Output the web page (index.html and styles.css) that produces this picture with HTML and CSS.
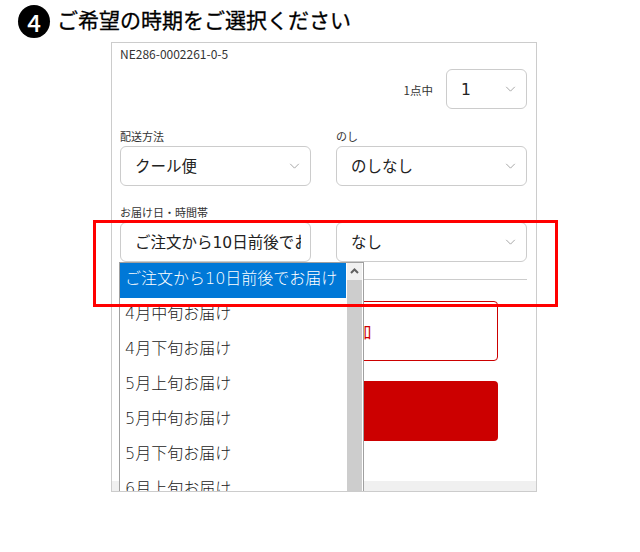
FILE: index.html
```html
<html>
<head>
<title>ご希望の時期をご選択ください</title>
<link rel="stylesheet" href="styles.css">
</head>
<body>
<h2 class="step"><span class="step-no">4</span><span class="step-text">ご希望の時期をご選択ください</span></h2>

<div class="frame">
  <p class="sku">NE286-0002261-0-5</p>

  <div class="qty-row">
    <span class="qty-label">1点中</span>
    <div class="select qty-select"><span class="select-text">1</span><svg class="chev" viewBox="0 0 12 7"><path d="M1 1l5 5 5-5"/></svg></div>
  </div>

  <div class="form-row">
    <div class="field">
      <label class="field-label">配送方法</label>
      <div class="select"><span class="select-text">クール便</span><svg class="chev" viewBox="0 0 12 7"><path d="M1 1l5 5 5-5"/></svg></div>
    </div>
    <div class="field">
      <label class="field-label">のし</label>
      <div class="select"><span class="select-text">のしなし</span><svg class="chev" viewBox="0 0 12 7"><path d="M1 1l5 5 5-5"/></svg></div>
    </div>
  </div>

  <div class="form-row form-row-2">
    <div class="field">
      <label class="field-label">お届け日・時間帯</label>
      <div class="select select-open"><span class="select-text">ご注文から10日前後でお届け</span></div>
    </div>
    <div class="field">
      <label class="field-label">&nbsp;</label>
      <div class="select"><span class="select-text">なし</span><svg class="chev" viewBox="0 0 12 7"><path d="M1 1l5 5 5-5"/></svg></div>
    </div>
  </div>

  <hr class="line">

  <div class="btn btn-outline">リストに追加</div>
  <div class="btn btn-red">カートに入れる</div>

  <div class="strip"></div>

  <!-- open dropdown -->
  <div class="listbox">
    <div class="options">
      <div class="option selected">ご注文から10日前後でお届け</div>
      <div class="option">4月中旬お届け</div>
      <div class="option">4月下旬お届け</div>
      <div class="option">5月上旬お届け</div>
      <div class="option">5月中旬お届け</div>
      <div class="option">5月下旬お届け</div>
      <div class="option">6月上旬お届け</div>
    </div>
    <div class="scrollbar">
      <div class="scroll-up"><svg viewBox="0 0 9 6"><path d="M1 5l3.5-3.5L8 5"/></svg></div>
      <div class="scroll-thumb"></div>
    </div>
  </div>
</div>

<div class="highlight"></div>
</body>
</html>
```

FILE: styles.css
```css
html, body {
  margin: 0;
  padding: 0;
}
body {
  position: relative;
  width: 640px;
  height: 552px;
  overflow: hidden;
  background: #fff;
  color: #333;
  font-family: "Noto Sans CJK JP", "Noto Sans", sans-serif;
}
.step {
  display: flex;
  align-items: center;
  height: 33px;
  margin: 0;
  padding: 5px 0 4px 18px;
  color: #000;
  font-size: 21px;
  font-weight: 400;
  line-height: 32px;
}
.step-text {
  margin-left: -1px;
  padding-bottom: 6px;
  -webkit-text-stroke: 0.3px #000;
}
.step-no {
  width: 32px;
  height: 33px;
  margin-right: 8px;
  border-radius: 50%;
  background: #000;
  color: #fff;
  font-size: 24px;
  font-weight: 500;
  line-height: 33px;
  text-align: center;
}
.frame {
  position: relative;
  box-sizing: border-box;
  width: 426px;
  height: 450px;
  margin-left: 111px;
  padding: 0 9px 0 8px;
  border: 1px solid #ccc;
  overflow: hidden;
}
.sku {
  height: 12px;
  margin: 5px 0 9px;
  font-size: 12px;
  line-height: 12px;
}
.qty-row {
  display: flex;
  align-items: center;
  justify-content: flex-end;
  gap: 13px;
}
.qty-label {
  font-size: 11.5px;
  padding-top: 2px;
}
.qty-select {
  flex: none;
  width: 81px;
}
.form-row {
  display: flex;
  gap: 25px;
  margin-top: 21px;
}
.form-row-2 {
  margin-top: 20px;
}
.field {
  width: 191px;
  min-width: 0;
}
.field-label {
  display: block;
  height: 16px;
  font-size: 11px;
  line-height: 12px;
}
.select {
  position: relative;
  box-sizing: border-box;
  height: 40px;
  padding: 0 14px;
  border: 1px solid #ccc;
  border-radius: 6px;
  color: #222;
  font-family: "DejaVu Sans", "Noto Sans CJK JP", sans-serif;
  font-size: 15.5px;
  background: #fff;
}
.select-text {
  display: block;
  overflow: hidden;
  white-space: nowrap;
  line-height: 40px;
}
.select-open {
  padding-right: 9px;
}
.chev {
  position: absolute;
  top: 16px;
  right: 10px;
  width: 11px;
  height: 6px;
  fill: none;
  stroke: #999;
  stroke-width: 1;
}
.line {
  height: 1px;
  margin: 17px 0 21px;
  border: 0;
  background: #ccc;
}
.btn {
  box-sizing: border-box;
  width: 349px;
  height: 60px;
  margin: 0 auto 20px;
  border-radius: 4px;
  font-size: 16px;
  line-height: 58px;
  text-align: center;
}
.btn-outline {
  border: 1px solid #c00;
  color: #c00;
}
.btn-red {
  background: #c00;
  color: #c00;
  margin-bottom: 40px;
}
.strip {
  height: 10px;
  margin: 0 -9px 0 -8px;
  background: #f0f0f0;
}
.listbox {
  position: absolute;
  top: 219px;
  left: 7px;
  display: flex;
  width: 245px;
  height: 240px;
  box-sizing: border-box;
  border: 1px solid #a0a0a0;
  background: #fff;
}
.options {
  width: 226px;
  height: 240px;
  overflow: hidden;
}
.option {
  height: 35px;
  padding-left: 5px;
  color: #222;
  font-family: "DejaVu Sans", "Noto Sans CJK JP", sans-serif;
  font-size: 16px;
  font-weight: 300;
  line-height: 32px;
  white-space: nowrap;
}
.selected {
  background: #0078d7;
  color: #fff;
}
.scrollbar {
  width: 15px;
  margin-left: 1px;
}
.scroll-up {
  height: 17px;
  background: #f0f0f0;
  text-align: center;
}
.scroll-up svg {
  width: 9px;
  height: 6px;
  margin-top: 5px;
  fill: none;
  stroke: #606060;
  stroke-width: 2;
  vertical-align: top;
}
.scroll-thumb {
  height: 230px;
  background: #cdcdcd;
}
.highlight {
  position: absolute;
  top: 220px;
  left: 93px;
  box-sizing: border-box;
  width: 465px;
  height: 87px;
  border: 3px solid #f00;
}
```
